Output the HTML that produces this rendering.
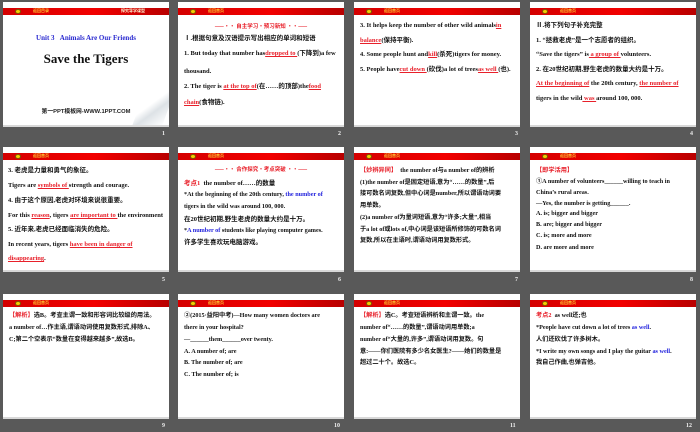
<!DOCTYPE html>
<html><head><meta charset="utf-8"><style>
*{margin:0;padding:0;box-sizing:border-box}
body{width:700px;height:432px;background:#595959;position:relative;overflow:hidden;font-family:"Liberation Serif","Noto Sans CJK SC",serif}
.s{position:absolute;width:166px;height:125px;background:#fff;border-bottom:2px solid #d8d8d8;overflow:hidden}
.bar{position:absolute;left:0;top:6px;width:100%;height:7px;background:linear-gradient(90deg,#d40000,#f20000 55%,#b80000)}
.logo{position:absolute;left:12px;top:1px;width:6px;height:5px;border-radius:50%;background:#f5d000;border:1px solid #7a5a00}
.bt{position:absolute;left:30px;top:0;font:bold 4px "Noto Sans CJK SC",sans-serif;color:#ffcc33;line-height:7px}
.l{position:absolute;left:6px;font-size:6.5px;font-weight:bold;color:#111;white-space:nowrap;line-height:8px}
.l.m{font-size:6.2px}
.r{color:#e8202a;text-decoration:underline}
.b{color:#2222dd}
.rd{color:#e8202a}
.n{position:absolute;color:#eee;font:bold 6px "Liberation Serif",serif}
.h{position:absolute;left:0;width:100%;text-align:center;font-size:5.5px;color:#e8202a;font-family:"Noto Sans CJK SC",sans-serif;font-weight:bold}
</style></head><body>

<div class="s" style="left:3px;top:2px">
 <div class="bar"><div class="logo"></div><div class="bt">返回目录</div><div class="bt" style="left:118px;color:#ffd">探究导学课型</div></div>
 <div style="position:absolute;left:0;width:100%;top:32px;text-align:center;font-size:7px;font-weight:bold;color:#2a2ad0">Unit 3&nbsp;&nbsp;&nbsp;Animals Are Our Friends</div>
 <div style="position:absolute;left:0;width:100%;top:49px;text-align:center;font-size:13px;font-weight:bold;color:#111">Save the Tigers</div>
 <div style="position:absolute;left:0;width:100%;top:104px;text-align:center;font:bold 5.8px 'Liberation Sans','Noto Sans CJK SC',sans-serif;color:#222">第一PPT模板网-WWW.1PPT.COM</div>
 <div style="position:absolute;right:0;top:85px;width:30px;height:40px;background:linear-gradient(135deg,#fff 40%,#dde2e6 60%,#fff);transform:skewX(-20deg)"></div>
</div>
<div class="n" style="left:162px;top:131px">1</div>

<div class="s" style="left:178px;top:2px">
 <div class="bar"><div class="logo"></div><div class="bt">返回首页</div></div>
 <div class="h" style="top:20px">——•• 自主学习·预习新知 ••——</div>
 <div class="l" style="top:33px">Ⅰ.根据句意及汉语提示写出相应的单词和短语</div>
 <div class="l" style="top:48px">1. But today that number has<span class="r">dropped to </span>(下降到)a few</div>
 <div class="l" style="top:66px">thousand.</div>
 <div class="l" style="top:81px">2. The tiger is <span class="r">at the top of</span>(在……的顶部)the<span class="r">food</span></div>
 <div class="l" style="top:97px"><span class="r">chain</span>(食物链).</div>
</div>
<div class="n" style="left:338px;top:131px">2</div>

<div class="s" style="left:354px;top:2px">
 <div class="bar"><div class="logo"></div><div class="bt">返回首页</div></div>
 <div class="l" style="top:20px">3. It helps keep the number of other wild animals<span class="r">in</span></div>
 <div class="l" style="top:35px"><span class="r">balance</span>(保持平衡).</div>
 <div class="l" style="top:49px">4. Some people hunt and<span class="r">kill</span>(杀死)tigers for money.</div>
 <div class="l" style="top:64px">5. People have<span class="r">cut down </span>(砍伐)a lot of trees<span class="r">as well </span>(也).</div>
</div>
<div class="n" style="left:515px;top:131px">3</div>

<div class="s" style="left:530px;top:2px">
 <div class="bar"><div class="logo"></div><div class="bt">返回首页</div></div>
 <div class="l" style="top:20px">Ⅱ.将下列句子补充完整</div>
 <div class="l" style="top:35px">1. “拯救老虎”是一个志愿者的组织。</div>
 <div class="l" style="top:49px">“Save the tigers” is<span class="r"> a group of </span> volunteers.</div>
 <div class="l" style="top:64px">2. 在20世纪初期,野生老虎的数量大约是十万。</div>
 <div class="l" style="top:78px"><span class="r">At the beginning of</span> the 20th century, <span class="r">the number of</span></div>
 <div class="l" style="top:93px">tigers in the wild<span class="r"> was </span> around 100, 000.</div>
</div>
<div class="n" style="left:690px;top:131px">4</div>

<div class="s" style="left:3px;top:147px">
 <div class="bar"><div class="logo"></div><div class="bt">返回首页</div></div>
 <div class="l" style="top:20px;left:5px">3. 老虎是力量和勇气的象征。</div>
 <div class="l" style="top:35px;left:5px">Tigers are <span class="r">symbols of </span> strength and courage.</div>
 <div class="l" style="top:50px;left:5px">4. 由于这个原因,老虎对环境来说很重要。</div>
 <div class="l" style="top:65px;left:5px">For this <span class="r">reason</span>, tigers <span class="r">are important to </span> the environment</div>
 <div class="l" style="top:79px;left:5px">5. 近年来,老虎已经面临消失的危险。</div>
 <div class="l" style="top:94px;left:5px">In recent years, tigers <span class="r">have been in danger of</span></div>
 <div class="l" style="top:108px;left:5px"><span class="r">disappearing</span>.</div>
</div>
<div class="n" style="left:162px;top:277px">5</div>

<div class="s" style="left:178px;top:147px">
 <div class="bar"><div class="logo"></div><div class="bt">返回首页</div></div>
 <div class="h" style="top:18px">——•• 合作探究·考点突破 ••——</div>
 <div class="l" style="top:33px"><span class="rd" style="font-size:6.5px">考点1</span>&nbsp; the number of……的数量</div>
 <div class="l m" style="top:44px">*At the beginning of the 20th century, <span class="b">the number of</span></div>
 <div class="l m" style="top:56px">tigers in the wild was around 100, 000.</div>
 <div class="l" style="top:69px">在20世纪初期,野生老虎的数量大约是十万。</div>
 <div class="l m" style="top:80px">*<span class="b">A number of</span> students like playing computer games.</div>
 <div class="l" style="top:92px">许多学生喜欢玩电脑游戏。</div>
</div>
<div class="n" style="left:338px;top:277px">6</div>

<div class="s" style="left:354px;top:147px">
 <div class="bar"><div class="logo"></div><div class="bt">返回首页</div></div>
 <div class="l m" style="top:20px"><span class="rd">【妙辨异同】</span>&nbsp;&nbsp;the number of与a number of的辨析</div>
 <div class="l m" style="top:32px">(1)the number of是固定短语,意为“……的数量”,后</div>
 <div class="l m" style="top:43px">接可数名词复数,但中心词是number,所以谓语动词要</div>
 <div class="l m" style="top:55px">用单数。</div>
 <div class="l m" style="top:67px">(2)a number of为量词短语,意为“许多;大量”,相当</div>
 <div class="l m" style="top:79px">于a lot of或lots of,中心词是该短语所修饰的可数名词</div>
 <div class="l m" style="top:90px">复数,所以在主语时,谓语动词用复数形式。</div>
</div>
<div class="n" style="left:515px;top:277px">7</div>

<div class="s" style="left:530px;top:147px">
 <div class="bar"><div class="logo"></div><div class="bt">返回首页</div></div>
 <div class="l m" style="top:20px"><span class="rd">【即学活用】</span></div>
 <div class="l m" style="top:31px">①A number of volunteers______willing to teach in</div>
 <div class="l m" style="top:42px">China’s rural areas.</div>
 <div class="l m" style="top:53px">—Yes, the number is getting______.</div>
 <div class="l m" style="top:63px">A. is; bigger and bigger</div>
 <div class="l m" style="top:74px">B. are; bigger and bigger</div>
 <div class="l m" style="top:85px">C. is; more and more</div>
 <div class="l m" style="top:97px">D. are more and more</div>
</div>
<div class="n" style="left:690px;top:277px">8</div>

<div class="s" style="left:3px;top:294px">
 <div class="bar"><div class="logo"></div><div class="bt">返回首页</div></div>
 <div class="l m" style="top:18px"><span class="rd">【解析】</span>选B。考查主谓一致和形容词比较级的用法。</div>
 <div class="l m" style="top:30px">a number of…作主语,谓语动词使用复数形式,排除A、</div>
 <div class="l m" style="top:42px">C;第二个空表示“数量在变得越来越多”,故选B。</div>
</div>
<div class="n" style="left:162px;top:423px">9</div>

<div class="s" style="left:178px;top:294px">
 <div class="bar"><div class="logo"></div><div class="bt">返回首页</div></div>
 <div class="l m" style="top:18px">②(2015·益阳中考)—How many women doctors are</div>
 <div class="l m" style="top:30px">there in your hospital?</div>
 <div class="l m" style="top:42px">—______them______over twenty.</div>
 <div class="l m" style="top:54px">A. A number of; are</div>
 <div class="l m" style="top:65px">B. The number of; are</div>
 <div class="l m" style="top:77px">C. The number of; is</div>
</div>
<div class="n" style="left:334px;top:423px">10</div>

<div class="s" style="left:354px;top:294px">
 <div class="bar"><div class="logo"></div><div class="bt">返回首页</div></div>
 <div class="l m" style="top:18px"><span class="rd">【解析】</span>选C。考查短语辨析和主谓一致。the</div>
 <div class="l m" style="top:30px">number of“……的数量”,谓语动词用单数;a</div>
 <div class="l m" style="top:42px">number of“大量的,许多”,谓语动词用复数。句</div>
 <div class="l m" style="top:54px">意:——你们医院有多少名女医生?——她们的数量是</div>
 <div class="l m" style="top:65px">超过二十个。故选C。</div>
</div>
<div class="n" style="left:510px;top:423px">11</div>

<div class="s" style="left:530px;top:294px">
 <div class="bar"><div class="logo"></div><div class="bt">返回首页</div></div>
 <div class="l m" style="top:18px"><span class="rd">考点2</span>&nbsp; as well还;也</div>
 <div class="l m" style="top:30px">*People have cut down a lot of trees <span class="b">as well</span>.</div>
 <div class="l m" style="top:42px">人们还砍伐了许多树木。</div>
 <div class="l m" style="top:54px">*I write my own songs and I play the guitar <span class="b">as well</span>.</div>
 <div class="l m" style="top:65px">我自己作曲,也弹吉他。</div>
</div>
<div class="n" style="left:686px;top:423px">12</div>

</body></html>
